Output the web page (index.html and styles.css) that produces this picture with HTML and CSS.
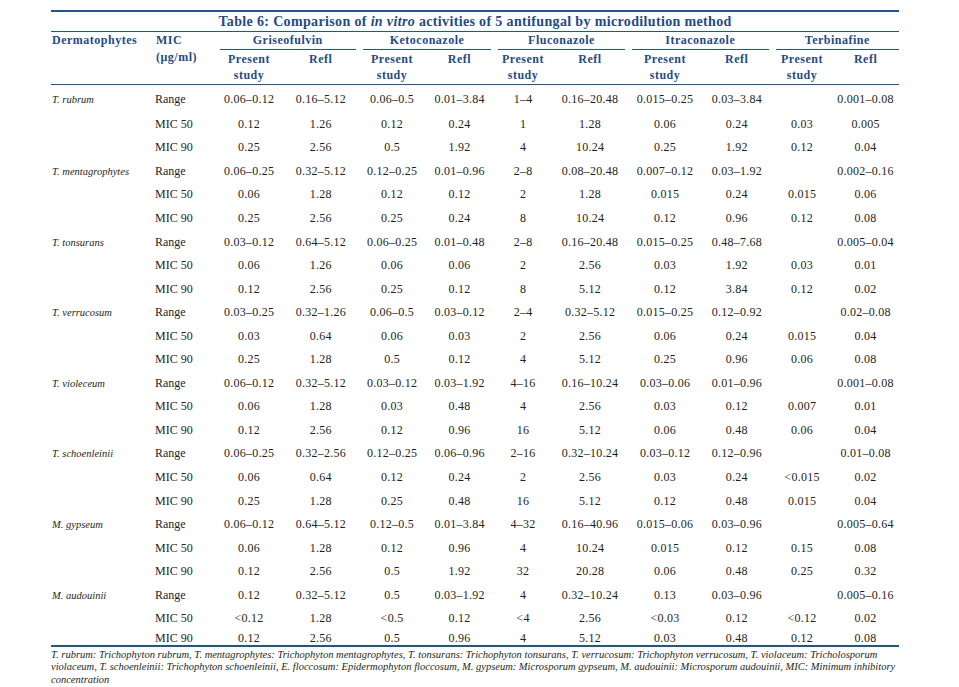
FILE: index.html
```html
<!DOCTYPE html>
<html lang="en">
<head>
<meta charset="utf-8">
<title>Table 6</title>
<link rel="stylesheet" href="styles.css">
</head>
<body>
<div class="page">
<table class="mic">
<colgroup>
<col class="c-derm"><col class="c-mic">
<col class="c-g1"><col class="c-g2">
<col class="c-k1"><col class="c-k2">
<col class="c-f1"><col class="c-f2">
<col class="c-i1"><col class="c-i2">
<col class="c-t1"><col class="c-t2">
</colgroup>
<thead>
<tr class="title-row"><th colspan="12" class="title">Table 6: Comparison of <i>in vitro</i> activities of 5 antifungal by microdilution method</th></tr>
<tr class="h1">
<th rowspan="2" class="hl">Dermatophytes</th>
<th rowspan="2" class="hl">MIC<br>(μg/ml)</th>
<th colspan="2" class="grp"><div>Griseofulvin</div></th>
<th colspan="2" class="grp"><div>Ketoconazole</div></th>
<th colspan="2" class="grp"><div>Fluconazole</div></th>
<th colspan="2" class="grp"><div>Itraconazole</div></th>
<th colspan="2" class="grp last"><div>Terbinafine</div></th>
</tr>
<tr class="h2">
<th>Present<br>study</th><th>Refl</th>
<th>Present<br>study</th><th>Refl</th>
<th>Present<br>study</th><th>Refl</th>
<th>Present<br>study</th><th>Refl</th>
<th>Present<br>study</th><th>Refl</th>
</tr>
</thead>
<tbody>
<tr><td class="sp">T. rubrum</td><td class="lbl">Range</td><td>0.06–0.12</td><td>0.16–5.12</td><td>0.06–0.5</td><td>0.01–3.84</td><td>1–4</td><td>0.16–20.48</td><td>0.015–0.25</td><td>0.03–3.84</td><td></td><td>0.001–0.08</td></tr>
<tr><td></td><td class="lbl">MIC 50</td><td>0.12</td><td>1.26</td><td>0.12</td><td>0.24</td><td>1</td><td>1.28</td><td>0.06</td><td>0.24</td><td>0.03</td><td>0.005</td></tr>
<tr><td></td><td class="lbl">MIC 90</td><td>0.25</td><td>2.56</td><td>0.5</td><td>1.92</td><td>4</td><td>10.24</td><td>0.25</td><td>1.92</td><td>0.12</td><td>0.04</td></tr>

<tr><td class="sp">T. mentagrophytes</td><td class="lbl">Range</td><td>0.06–0.25</td><td>0.32–5.12</td><td>0.12–0.25</td><td>0.01–0.96</td><td>2–8</td><td>0.08–20.48</td><td>0.007–0.12</td><td>0.03–1.92</td><td></td><td>0.002–0.16</td></tr>
<tr><td></td><td class="lbl">MIC 50</td><td>0.06</td><td>1.28</td><td>0.12</td><td>0.12</td><td>2</td><td>1.28</td><td>0.015</td><td>0.24</td><td>0.015</td><td>0.06</td></tr>
<tr><td></td><td class="lbl">MIC 90</td><td>0.25</td><td>2.56</td><td>0.25</td><td>0.24</td><td>8</td><td>10.24</td><td>0.12</td><td>0.96</td><td>0.12</td><td>0.08</td></tr>

<tr><td class="sp">T. tonsurans</td><td class="lbl">Range</td><td>0.03–0.12</td><td>0.64–5.12</td><td>0.06–0.25</td><td>0.01–0.48</td><td>2–8</td><td>0.16–20.48</td><td>0.015–0.25</td><td>0.48–7.68</td><td></td><td>0.005–0.04</td></tr>
<tr><td></td><td class="lbl">MIC 50</td><td>0.06</td><td>1.26</td><td>0.06</td><td>0.06</td><td>2</td><td>2.56</td><td>0.03</td><td>1.92</td><td>0.03</td><td>0.01</td></tr>
<tr><td></td><td class="lbl">MIC 90</td><td>0.12</td><td>2.56</td><td>0.25</td><td>0.12</td><td>8</td><td>5.12</td><td>0.12</td><td>3.84</td><td>0.12</td><td>0.02</td></tr>

<tr><td class="sp">T. verrucosum</td><td class="lbl">Range</td><td>0.03–0.25</td><td>0.32–1.26</td><td>0.06–0.5</td><td>0.03–0.12</td><td>2–4</td><td>0.32–5.12</td><td>0.015–0.25</td><td>0.12–0.92</td><td></td><td>0.02–0.08</td></tr>
<tr><td></td><td class="lbl">MIC 50</td><td>0.03</td><td>0.64</td><td>0.06</td><td>0.03</td><td>2</td><td>2.56</td><td>0.06</td><td>0.24</td><td>0.015</td><td>0.04</td></tr>
<tr><td></td><td class="lbl">MIC 90</td><td>0.25</td><td>1.28</td><td>0.5</td><td>0.12</td><td>4</td><td>5.12</td><td>0.25</td><td>0.96</td><td>0.06</td><td>0.08</td></tr>

<tr><td class="sp">T. violeceum</td><td class="lbl">Range</td><td>0.06–0.12</td><td>0.32–5.12</td><td>0.03–0.12</td><td>0.03–1.92</td><td>4–16</td><td>0.16–10.24</td><td>0.03–0.06</td><td>0.01–0.96</td><td></td><td>0.001–0.08</td></tr>
<tr><td></td><td class="lbl">MIC 50</td><td>0.06</td><td>1.28</td><td>0.03</td><td>0.48</td><td>4</td><td>2.56</td><td>0.03</td><td>0.12</td><td>0.007</td><td>0.01</td></tr>
<tr><td></td><td class="lbl">MIC 90</td><td>0.12</td><td>2.56</td><td>0.12</td><td>0.96</td><td>16</td><td>5.12</td><td>0.06</td><td>0.48</td><td>0.06</td><td>0.04</td></tr>

<tr><td class="sp">T. schoenleinii</td><td class="lbl">Range</td><td>0.06–0.25</td><td>0.32–2.56</td><td>0.12–0.25</td><td>0.06–0.96</td><td>2–16</td><td>0.32–10.24</td><td>0.03–0.12</td><td>0.12–0.96</td><td></td><td>0.01–0.08</td></tr>
<tr><td></td><td class="lbl">MIC 50</td><td>0.06</td><td>0.64</td><td>0.12</td><td>0.24</td><td>2</td><td>2.56</td><td>0.03</td><td>0.24</td><td>&lt;0.015</td><td>0.02</td></tr>
<tr><td></td><td class="lbl">MIC 90</td><td>0.25</td><td>1.28</td><td>0.25</td><td>0.48</td><td>16</td><td>5.12</td><td>0.12</td><td>0.48</td><td>0.015</td><td>0.04</td></tr>

<tr><td class="sp">M. gypseum</td><td class="lbl">Range</td><td>0.06–0.12</td><td>0.64–5.12</td><td>0.12–0.5</td><td>0.01–3.84</td><td>4–32</td><td>0.16–40.96</td><td>0.015–0.06</td><td>0.03–0.96</td><td></td><td>0.005–0.64</td></tr>
<tr><td></td><td class="lbl">MIC 50</td><td>0.06</td><td>1.28</td><td>0.12</td><td>0.96</td><td>4</td><td>10.24</td><td>0.015</td><td>0.12</td><td>0.15</td><td>0.08</td></tr>
<tr><td></td><td class="lbl">MIC 90</td><td>0.12</td><td>2.56</td><td>0.5</td><td>1.92</td><td>32</td><td>20.28</td><td>0.06</td><td>0.48</td><td>0.25</td><td>0.32</td></tr>

<tr><td class="sp">M. audouinii</td><td class="lbl">Range</td><td>0.12</td><td>0.32–5.12</td><td>0.5</td><td>0.03–1.92</td><td>4</td><td>0.32–10.24</td><td>0.13</td><td>0.03–0.96</td><td></td><td>0.005–0.16</td></tr>
<tr><td></td><td class="lbl">MIC 50</td><td>&lt;0.12</td><td>1.28</td><td>&lt;0.5</td><td>0.12</td><td>&lt;4</td><td>2.56</td><td>&lt;0.03</td><td>0.12</td><td>&lt;0.12</td><td>0.02</td></tr>
<tr class="last-row"><td></td><td class="lbl">MIC 90</td><td>0.12</td><td>2.56</td><td>0.5</td><td>0.96</td><td>4</td><td>5.12</td><td>0.03</td><td>0.48</td><td>0.12</td><td>0.08</td></tr>
</tbody>
</table>
<p class="note">T. rubrum: Trichophyton rubrum, T. mentagrophytes: Trichophyton mentagrophytes, T. tonsurans: Trichophyton tonsurans, T. verrucosum: Trichophyton verrucosum, T. violaceum: Tricholosporum<br>violaceum, T. schoenleinii: Trichophyton schoenleinii, E. floccosum: Epidermophyton floccosum, M. gypseum: Microsporum gypseum, M. audouinii: Microsporum audouinii, MIC: Minimum inhibitory<br>concentration</p>
</div>
</body>
</html>
```

FILE: styles.css
```css
html, body {
  margin: 0;
  padding: 0;
  background: #ffffff;
}

.page {
  padding: 10px 0 0 51px;
  font-family: "Liberation Serif", "Times New Roman", serif;
  color: #231f20;
}

.mic {
  width: 848px;
  table-layout: fixed;
  border-collapse: separate;
  border-spacing: 0;
  border-bottom: 2px solid #1c5599;
}

.c-derm { width: 104px; }
.c-mic { width: 61px; }
.c-g1 { width: 66px; }
.c-g2 { width: 77.5px; }
.c-k1 { width: 65px; }
.c-k2 { width: 70px; }
.c-f1 { width: 57px; }
.c-f2 { width: 77px; }
.c-i1 { width: 73px; }
.c-i2 { width: 70.5px; }
.c-t1 { width: 60px; }
.c-t2 { width: 67px; }

.mic th {
  color: #1f4b87;
  font-weight: bold;
  font-size: 12px;
  letter-spacing: 0.5px;
  padding: 0;
}

.mic th.title {
  border-top: 2px solid #1c5599;
  border-bottom: 1px solid #1c5599;
  height: 19px;
  line-height: 19px;
  font-size: 14px;
  letter-spacing: 0.35px;
  text-align: center;
}

.mic th.hl {
  text-align: left;
  vertical-align: top;
  line-height: 17px;
  padding-top: 0;
  padding-left: 1px;
  border-bottom: 1px solid #1c5599;
  white-space: nowrap;
}

.mic th.grp {
  padding: 0 3.5px;
  height: 18px;
  vertical-align: top;
}

.mic th.grp.last {
  padding-right: 0;
}

.mic th.grp div {
  line-height: 17px;
  border-bottom: 1px solid #1c5599;
  text-align: center;
}

.mic .h2 th {
  vertical-align: top;
  text-align: center;
  line-height: 16px;
  padding-top: 1px;
  height: 33px;
  border-bottom: 1px solid #1c5599;
}

.mic td {
  padding: 0;
  height: 23.55px;
  font-size: 12px;
  letter-spacing: 0.25px;
  text-align: center;
  vertical-align: middle;
  white-space: nowrap;
}

.mic tbody tr:first-child td {
  height: 25.55px;
  padding-top: 2px;
}

.mic td.sp {
  text-align: left;
  font-style: italic;
  font-size: 10.5px;
  letter-spacing: 0;
  padding-left: 1px;
}

.mic td.lbl {
  text-align: left;
  letter-spacing: 0;
}

.mic tr.last-row td {
  height: 14px;
  line-height: 14px;
}

.note {
  margin: 0;
  padding-top: 2px;
  font-style: italic;
  font-size: 10.5px;
  line-height: 12.5px;
  white-space: nowrap;
  color: #231f20;
}
```
